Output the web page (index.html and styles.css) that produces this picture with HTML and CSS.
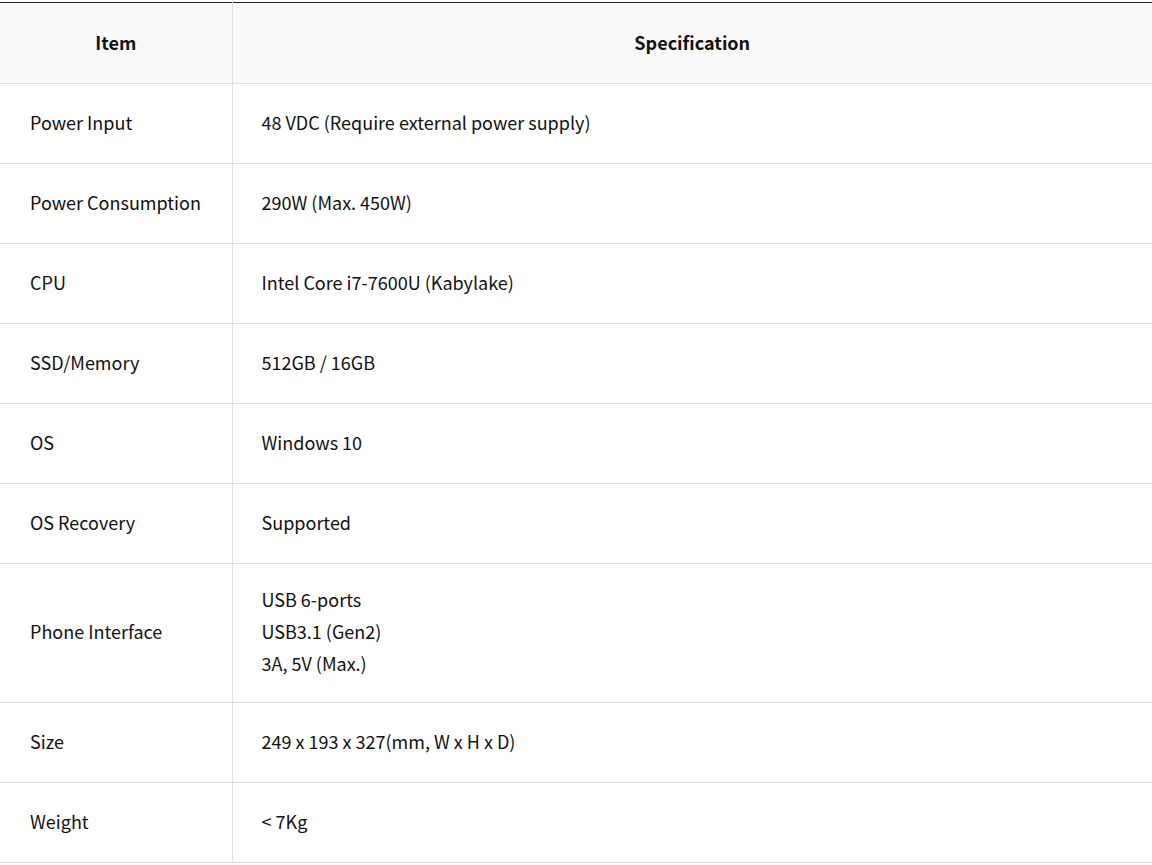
FILE: index.html
```html
<!DOCTYPE html>
<html>
<head>
<meta charset="utf-8">
<link rel="stylesheet" href="styles.css">
</head>
<body>
<table class="spec">
  <thead>
    <tr><th class="c1">Item</th><th class="c2">Specification</th></tr>
  </thead>
  <tbody>
    <tr><td class="c1">Power Input</td><td class="c2">48 VDC (Require external power supply)</td></tr>
    <tr><td class="c1">Power Consumption</td><td class="c2">290W (Max. 450W)</td></tr>
    <tr><td class="c1">CPU</td><td class="c2">Intel Core i7-7600U (Kabylake)</td></tr>
    <tr><td class="c1">SSD/Memory</td><td class="c2">512GB / 16GB</td></tr>
    <tr><td class="c1">OS</td><td class="c2">Windows 10</td></tr>
    <tr><td class="c1">OS Recovery</td><td class="c2">Supported</td></tr>
    <tr><td class="c1">Phone Interface</td><td class="c2">USB 6-ports<br>USB3.1 (Gen2)<br>3A, 5V (Max.)</td></tr>
    <tr><td class="c1">Size</td><td class="c2">249 x 193 x 327(mm, W x H x D)</td></tr>
    <tr><td class="c1">Weight</td><td class="c2">&lt; 7Kg</td></tr>
  </tbody>
</table>
</body>
</html>
```
FILE: styles.css
```css
html, body {
  margin: 0;
  padding: 0;
  background: #fff;
}
body {
  padding-top: 2px;
  font-family: "Noto Sans CJK KR", "Noto Sans", sans-serif;
  color: #111;
  font-size: 18px;
}
.spec {
  width: 100%;
  border-collapse: collapse;
  border-top: 1px solid #222;
  table-layout: fixed;
}
.spec th {
  background: #f9f9f9;
  font-weight: 700;
  text-align: center;
  height: 81px;
  box-sizing: border-box;
  padding: 0 0 3px;
  border-bottom: 1px solid #ddd;
  line-height: 32px;
}
.spec th.c1, .spec td.c1 {
  width: 232px;
  border-right: 1px solid #e2e2e2;
}
.spec td {
  height: 80px;
  box-sizing: border-box;
  padding: 19px 29px 23px 30px;
  line-height: 32px;
  border-bottom: 1px solid #ddd;
  vertical-align: middle;
  font-weight: 400;
}
.spec td.c2 {
  padding-left: 29px;
}
```
